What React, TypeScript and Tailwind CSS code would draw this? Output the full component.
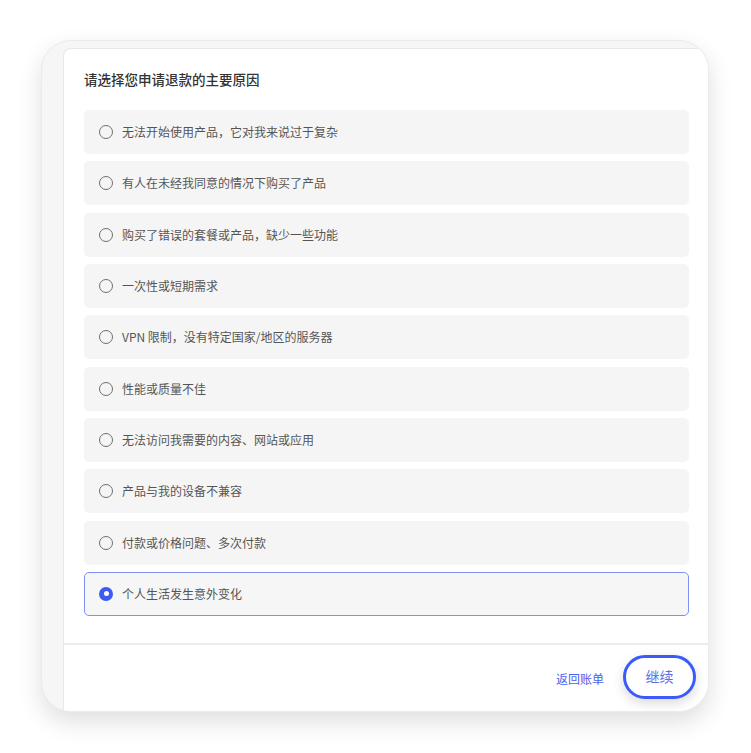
import { useState } from 'react'

const reasons = [
  '无法开始使用产品，它对我来说过于复杂',
  '有人在未经我同意的情况下购买了产品',
  '购买了错误的套餐或产品，缺少一些功能',
  '一次性或短期需求',
  'VPN 限制，没有特定国家/地区的服务器',
  '性能或质量不佳',
  '无法访问我需要的内容、网站或应用',
  '产品与我的设备不兼容',
  '付款或价格问题、多次付款',
  '个人生活发生意外变化',
]

function Radio({ checked }: { checked: boolean }) {
  if (checked) {
    return (
      <span className="flex h-[14px] w-[14px] shrink-0 items-center justify-center rounded-full bg-[#3d5af5]">
        <span className="h-[5px] w-[5px] rounded-full bg-white" />
      </span>
    )
  }
  return <span className="h-[14px] w-[14px] shrink-0 rounded-full border-[1.3px] border-[#6f6f6f]" />
}

export default function App() {
  const [selected, setSelected] = useState(9)

  return (
    <div
      className="min-h-[753px] w-[751px] bg-white pl-[41px] pt-[40px]"
      style={{ fontFamily: '"Noto Sans CJK SC", "Noto Sans", sans-serif' }}
    >
      <div className="h-[672px] w-[668px] overflow-hidden rounded-[30px] border border-[#ebebeb] bg-[#f6f6f6] pl-[21px] pt-[7px] shadow-[0_10px_24px_rgba(0,0,0,0.13)]">
        <div className="flex h-full flex-col rounded-tl-[8px] border-l border-t border-[#e8e8e8] bg-white">
          <div className="pb-[27px] pl-[20px] pr-[19px] pt-[20px]">
            <h2 className="text-[13.5px] font-medium leading-[20px] text-[#333]">请选择您申请退款的主要原因</h2>
            <div className="mt-[21px] flex flex-col gap-[7.33px]">
              {reasons.map((r, i) => (
                <button
                  key={r}
                  onClick={() => setSelected(i)}
                  className={
                    i === selected
                      ? 'flex h-[44px] items-center gap-[9px] rounded-[5px] border border-[#7f8ff5] bg-[#f6f6f6] px-[14px] text-left'
                      : 'flex h-[44px] items-center gap-[9px] rounded-[5px] border border-transparent bg-[#f5f5f5] px-[14px] text-left'
                  }
                >
                  <Radio checked={i === selected} />
                  <span className="text-[12px] text-[#555]">{r}</span>
                </button>
              ))}
            </div>
          </div>
          <div className="flex flex-1 items-center justify-end gap-[19px] border-t-2 border-[#ececec] pb-[2px] pr-[12px]">
            <button className="pt-[4px] text-[12px] text-[#4d62e6]">返回账单</button>
            <button className="flex h-[44px] w-[73px] items-center justify-center rounded-full border-[3.5px] border-[#3a5bf9] bg-white text-[14px] text-[#5b6fe6] shadow-[0_4px_12px_rgba(0,0,0,0.15)]">
              继续
            </button>
          </div>
        </div>
      </div>
    </div>
  )
}
